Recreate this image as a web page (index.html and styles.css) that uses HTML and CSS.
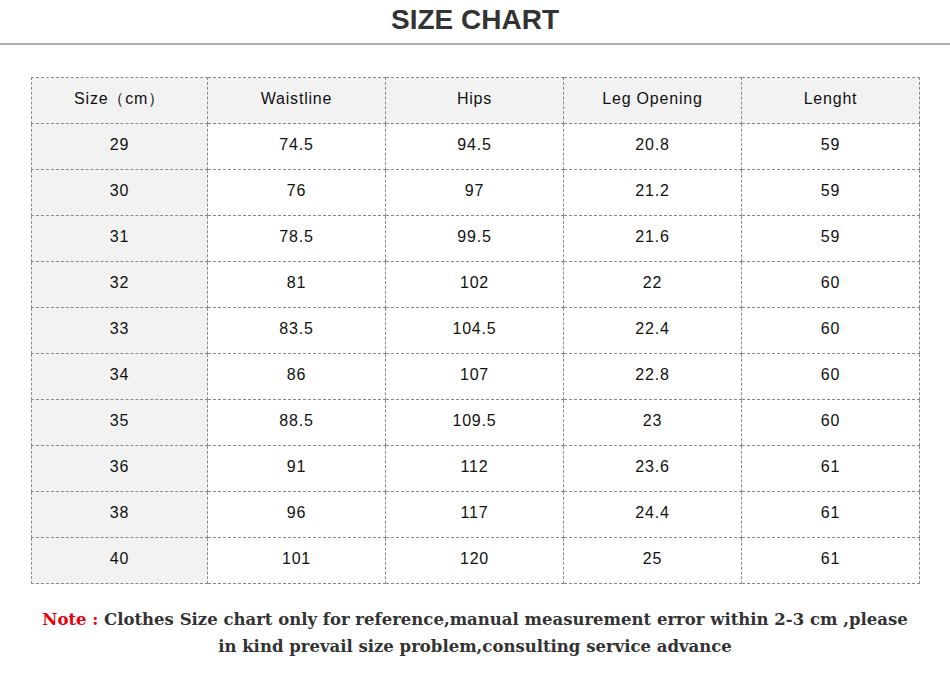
FILE: index.html
```html
<!DOCTYPE html>
<html>
<head>
<meta charset="utf-8">
<link rel="stylesheet" href="styles.css">
</head>
<body>
<div class="page">
  <header class="head"><h1 class="title">SIZE CHART</h1></header>
  <div class="wrap">
    <table class="chart">
      <colgroup><col class="c1"><col><col><col><col></colgroup>
      <tr class="hrow"><td>Size（cm）</td><td>Waistline</td><td>Hips</td><td>Leg Opening</td><td>Lenght</td></tr>
      <tr><td>29</td><td>74.5</td><td>94.5</td><td>20.8</td><td>59</td></tr>
      <tr><td>30</td><td>76</td><td>97</td><td>21.2</td><td>59</td></tr>
      <tr><td>31</td><td>78.5</td><td>99.5</td><td>21.6</td><td>59</td></tr>
      <tr><td>32</td><td>81</td><td>102</td><td>22</td><td>60</td></tr>
      <tr><td>33</td><td>83.5</td><td>104.5</td><td>22.4</td><td>60</td></tr>
      <tr><td>34</td><td>86</td><td>107</td><td>22.8</td><td>60</td></tr>
      <tr><td>35</td><td>88.5</td><td>109.5</td><td>23</td><td>60</td></tr>
      <tr><td>36</td><td>91</td><td>112</td><td>23.6</td><td>61</td></tr>
      <tr><td>38</td><td>96</td><td>117</td><td>24.4</td><td>61</td></tr>
      <tr><td>40</td><td>101</td><td>120</td><td>25</td><td>61</td></tr>
    </table>
  </div>
  <p class="note"><span class="red">Note :</span> Clothes Size chart only for reference,manual measurement error within 2-3 cm ,please in kind prevail size problem,consulting service advance</p>
</div>
</body>
</html>
```
FILE: styles.css
```css
html, body { margin: 0; padding: 0; background: #fff; }
.page { width: 950px; }
.head {
  height: 43px;
  border-bottom: 2px solid #acacac;
  display: flex;
  justify-content: center;
  align-items: flex-start;
}
.title {
  margin: 4px 0 0 0;
  font-family: "Liberation Sans Narrow", "Liberation Sans", Arial, sans-serif;
  font-weight: bold;
  font-size: 28px;
  line-height: 32px;
  color: #333;
}
.wrap { padding: 32px 0 0 31px; }
.chart {
  border-collapse: collapse;
  width: 889px;
  table-layout: fixed;
  font-family: "Liberation Sans", Arial, sans-serif;
  font-size: 16px;
  letter-spacing: 0.8px;
  color: #111;
}
.chart .c1 { width: 176px; }
.chart td {
  border: 1px dashed #8a8a8a;
  height: 42px;
  padding: 0 0 3px 0;
  text-align: center;
  vertical-align: middle;
}
.chart td:first-child, .hrow td { background: #f2f2f2; }
.note {
  margin: 22px 0 0 0;
  text-align: center;
  font-family: Georgia, "DejaVu Serif", serif;
  font-weight: bold;
  font-size: 16.5px;
  line-height: 27px;
  color: #333;
  padding: 0 38px;
}
.red { color: #e8000b; }
```
